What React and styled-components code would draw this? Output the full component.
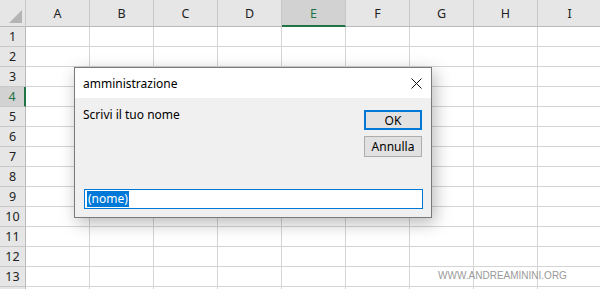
import React from "react";
import styled, { createGlobalStyle } from "styled-components";

const GlobalStyle = createGlobalStyle`
  html, body {
    margin: 0;
    padding: 0;
    background: #ffffff;
    overflow: hidden;
  }
  body {
    font-family: "Segoe UI", "Noto Sans", "Liberation Sans", sans-serif;
  }
`;

const COLUMNS = ["A", "B", "C", "D", "E", "F", "G", "H", "I"];
const ROWS = Array.from({ length: 14 }, (_, i) => i + 1);

const Page = styled.div`
  position: relative;
  width: 600px;
  height: 289px;
  overflow: hidden;
`;

const Sheet = styled.div`
  display: grid;
  grid-template-columns: 26px repeat(9, 64px);
  grid-template-rows: 27px repeat(14, 20px);
`;

const Corner = styled.div`
  box-sizing: border-box;
  background: #e6e6e6;
  border-right: 1px solid #c8c8c8;
  border-bottom: 1px solid #b9b9b9;
  display: flex;
  align-items: flex-end;
  justify-content: flex-end;
  padding: 0 3px 3px 0;
`;

const Triangle = styled.div`
  width: 0;
  height: 0;
  border-left: 13px solid transparent;
  border-bottom: 13px solid #b4b4b4;
`;

const ColHead = styled.div`
  box-sizing: border-box;
  background: ${(p) => (p.$active ? "#d2d2d2" : "#e6e6e6")};
  border-right: 1px solid #c8c8c8;
  border-bottom: ${(p) => (p.$active ? "2px solid #217346" : "1px solid #b9b9b9")};
  color: ${(p) => (p.$active ? "#217346" : "#222")};
  font-size: 12.5px;
  display: flex;
  align-items: center;
  justify-content: center;
  padding-top: ${(p) => (p.$active ? "1px" : "0")};
`;

const RowHead = styled.div`
  box-sizing: border-box;
  background: ${(p) => (p.$active ? "#d2d2d2" : "#e6e6e6")};
  border-right: ${(p) => (p.$active ? "2px solid #217346" : "1px solid #b9b9b9")};
  border-bottom: 1px solid #c8c8c8;
  color: ${(p) => (p.$active ? "#217346" : "#222")};
  font-size: 12.5px;
  display: flex;
  align-items: center;
  justify-content: center;
`;

const Cell = styled.div`
  box-sizing: border-box;
  background: #ffffff;
  border-right: 1px solid #d4d4d4;
  border-bottom: 1px solid #d4d4d4;
`;

const Dialog = styled.div`
  position: absolute;
  left: 74px;
  top: 67px;
  width: 358px;
  height: 151px;
  box-sizing: border-box;
  border: 1px solid #7a7a7a;
  background: #f0f0f0;
  box-shadow: 3px 5px 16px rgba(0, 0, 0, 0.28);
  display: flex;
  flex-direction: column;
`;

const TitleBar = styled.div`
  height: 30px;
  background: #ffffff;
  display: flex;
  align-items: center;
  justify-content: space-between;
  padding: 0 9px 0 8px;
  font-size: 12px;
  color: #000;
`;

const CloseIcon = styled.svg`
  width: 11px;
  height: 11px;
`;

const Body = styled.div`
  flex: 1;
  display: flex;
  flex-direction: column;
  padding: 10px 9px 8px 9px;
`;

const Top = styled.div`
  flex: 1;
  display: flex;
  justify-content: space-between;
  align-items: flex-start;
`;

const Prompt = styled.div`
  font-size: 12px;
  color: #000;
  margin-left: -1px;
  margin-top: -2px;
`;

const Buttons = styled.div`
  display: flex;
  flex-direction: column;
  gap: 6px;
  margin-top: 2px;
`;

const Button = styled.div`
  box-sizing: border-box;
  width: 58px;
  height: ${(p) => (p.$primary ? "20px" : "21px")};
  background: #e1e1e1;
  border: ${(p) => (p.$primary ? "2px solid #0078d7" : "1px solid #adadad")};
  font-size: 12px;
  color: #000;
  display: flex;
  align-items: center;
  justify-content: center;
`;

const Input = styled.div`
  box-sizing: border-box;
  height: 20px;
  width: 339px;
  background: #ffffff;
  border: 1px solid #0078d7;
  display: flex;
  align-items: center;
  padding-left: 2px;
`;

const Selection = styled.span`
  background: #0078d7;
  color: #ffffff;
  font-size: 12px;
  line-height: 16px;
  padding: 0 1px;
`;

const Watermark = styled.div`
  position: absolute;
  left: 438px;
  top: 270px;
  font-family: "Liberation Sans", Arial, sans-serif;
  font-size: 10px;
  color: #9a9a9a;
`;

export default function App() {
  return (
    <Page>
      <GlobalStyle />
      <Sheet>
        <Corner>
          <Triangle />
        </Corner>
        {COLUMNS.map((c) => (
          <ColHead key={c} $active={c === "E"}>
            {c}
          </ColHead>
        ))}
        {ROWS.map((r) => (
          <React.Fragment key={r}>
            <RowHead $active={r === 4}>{r < 14 ? r : ""}</RowHead>
            {COLUMNS.map((c) => (
              <Cell key={c} />
            ))}
          </React.Fragment>
        ))}
      </Sheet>

      <Dialog>
        <TitleBar>
          <span>amministrazione</span>
          <CloseIcon viewBox="0 0 11 11">
            <path d="M0.5 0.5 L10.5 10.5 M10.5 0.5 L0.5 10.5" stroke="#111" strokeWidth="1" />
          </CloseIcon>
        </TitleBar>
        <Body>
          <Top>
            <Prompt>Scrivi il tuo nome</Prompt>
            <Buttons>
              <Button $primary>OK</Button>
              <Button>Annulla</Button>
            </Buttons>
          </Top>
          <Input>
            <Selection>(nome)</Selection>
          </Input>
        </Body>
      </Dialog>

      <Watermark>WWW.ANDREAMININI.ORG</Watermark>
    </Page>
  );
}
